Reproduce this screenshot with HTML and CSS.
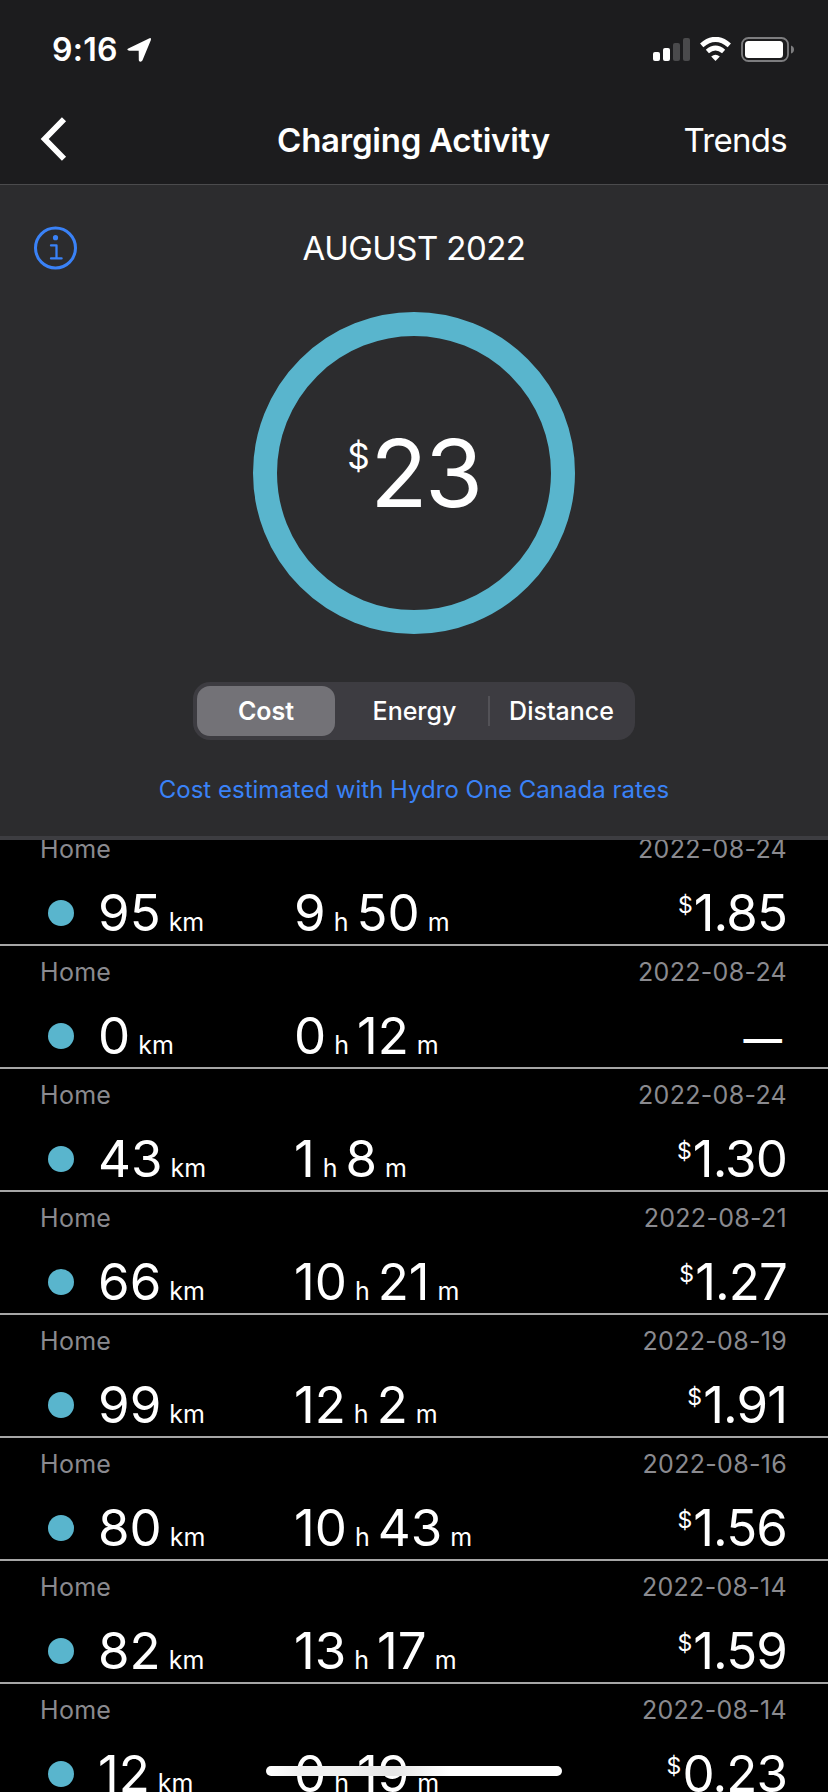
FILE: index.html
```html
<!DOCTYPE html>
<html lang="en">
<head>
<meta charset="utf-8">
<title>Charging Activity</title>
<link rel="stylesheet" href="styles.css">
</head>
<body>
<div class="screen">
  <header class="header">
    <div class="status">
      <span class="time">9:16</span>
      <svg class="location" width="26" height="26" viewBox="0 0 26 26"><path d="M2.3 11.400 23 1.400q2.600-1 1.900 1.600L16.400 23.600q-.9 1.600-2.700 1-.9-.5-.9-1.500l-.1-9.300-9.400-.1q-1.600-.1-2-1.200 0-.8 1-1.100z" fill="#fff"/></svg>
      <svg class="indicators" width="143" height="26" viewBox="0 0 143 26">
        <rect x="1" y="15" width="7" height="9" rx="2" fill="#fff"/>
        <rect x="11" y="11" width="7" height="13" rx="2" fill="#fff"/>
        <rect x="21" y="6" width="7" height="18" rx="2" fill="#4a4a4c"/>
        <rect x="31" y="1" width="7" height="23" rx="2" fill="#4a4a4c"/>
        <path d="M49.700 8.300Q63.500-3.600 77.300 8.300" fill="none" stroke="#fff" stroke-width="5"/>
        <path d="M55.400 14.500Q63.500 7.600 71.600 14.500" fill="none" stroke="#fff" stroke-width="4.800"/>
        <path d="M59.200 19.600Q63.500 16 67.800 19.600L63.500 24z" fill="#fff"/>
        <rect x="90" y="1" width="46" height="23" rx="6.500" fill="none" stroke="#7d7d7f" stroke-width="1.800"/>
        <rect x="93" y="4" width="38" height="17" rx="3.500" fill="#fff"/>
        <path d="M139 8.500q3 1 3 4t-3 4z" fill="#7d7d7f"/>
      </svg>
    </div>
    <nav class="nav">
      <svg class="back" width="27" height="44" viewBox="0 0 27 44"><path d="M24 2.200 4.700 22 24 41.800" fill="none" stroke="#fff" stroke-width="5.800"/></svg>
      <h1 class="title">Charging Activity</h1>
      <span class="trends">Trends</span>
    </nav>
  </header>

  <section class="summary">
    <div class="month-bar">
      <svg class="info" width="44" height="44" viewBox="0 0 44 44" fill="none" stroke="#3a82f7">
        <circle cx="22.500" cy="22" r="20" stroke-width="3"/>
        <circle cx="22.500" cy="11.700" r="2.600" fill="#3a82f7" stroke="none"/>
        <path d="M18 19.400h5.500v13M18 32.400h10.600" stroke-width="2.300" stroke-linecap="round" stroke-linejoin="round"/>
      </svg>
      <span class="month">AUGUST 2022</span>
    </div>
    <div class="ring"><span class="total"><span class="total-sign">$</span>23</span></div>
    <div class="segments">
      <span class="segment selected">Cost</span>
      <span class="segment middle">Energy</span>
      <span class="segment divided">Distance</span>
    </div>
    <a class="rates">Cost estimated with Hydro One Canada rates</a>
  </section>

  <main class="list">
    <div class="rows">
      <article class="row">
        <div class="meta"><span>Home</span><span class="date">2022-08-24</span></div>
        <div class="values"><i class="dot"></i><span class="distance">95<small>km</small></span><span class="duration">9<small>h</small><b>50</b><small>m</small></span><span class="cost"><sup>$</sup>1.85</span></div>
      </article>
      <article class="row">
        <div class="meta"><span>Home</span><span class="date">2022-08-24</span></div>
        <div class="values"><i class="dot"></i><span class="distance">0<small>km</small></span><span class="duration">0<small>h</small><b>12</b><small>m</small></span><span class="none">—</span></div>
      </article>
      <article class="row">
        <div class="meta"><span>Home</span><span class="date">2022-08-24</span></div>
        <div class="values"><i class="dot"></i><span class="distance">43<small>km</small></span><span class="duration">1<small>h</small><b>8</b><small>m</small></span><span class="cost"><sup>$</sup>1.30</span></div>
      </article>
      <article class="row">
        <div class="meta"><span>Home</span><span class="date">2022-08-21</span></div>
        <div class="values"><i class="dot"></i><span class="distance">66<small>km</small></span><span class="duration">10<small>h</small><b>21</b><small>m</small></span><span class="cost"><sup>$</sup>1.27</span></div>
      </article>
      <article class="row">
        <div class="meta"><span>Home</span><span class="date">2022-08-19</span></div>
        <div class="values"><i class="dot"></i><span class="distance">99<small>km</small></span><span class="duration">12<small>h</small><b>2</b><small>m</small></span><span class="cost"><sup>$</sup>1.91</span></div>
      </article>
      <article class="row">
        <div class="meta"><span>Home</span><span class="date">2022-08-16</span></div>
        <div class="values"><i class="dot"></i><span class="distance">80<small>km</small></span><span class="duration">10<small>h</small><b>43</b><small>m</small></span><span class="cost"><sup>$</sup>1.56</span></div>
      </article>
      <article class="row">
        <div class="meta"><span>Home</span><span class="date">2022-08-14</span></div>
        <div class="values"><i class="dot"></i><span class="distance">82<small>km</small></span><span class="duration">13<small>h</small><b>17</b><small>m</small></span><span class="cost"><sup>$</sup>1.59</span></div>
      </article>
      <article class="row">
        <div class="meta"><span>Home</span><span class="date">2022-08-14</span></div>
        <div class="values"><i class="dot"></i><span class="distance">12<small>km</small></span><span class="duration">0<small>h</small><b>19</b><small>m</small></span><span class="cost"><sup>$</sup>0.23</span></div>
      </article>
    </div>
  </main>
  <div class="home-indicator"></div>
</div>
</body>
</html>
```
FILE: styles.css
```css
* { box-sizing: border-box; }
body {
  margin: 0;
  background: #000;
  color: #fff;
  font-family: Inter, "Liberation Sans", sans-serif;
}
.screen {
  position: relative;
  display: flex;
  flex-direction: column;
  width: 828px;
  height: 1792px;
  overflow: hidden;
}

/* Header */
.header {
  height: 185px;
  flex: none;
  background: #1c1c1e;
  border-bottom: 1px solid #4b4b4d;
}
.status {
  display: flex;
  align-items: flex-start;
  height: 96px;
  padding: 35px 33px 0 52px;
}
.time {
  width: 74px;
  font-size: 32px;
  font-weight: 600;
  line-height: 29px;
  letter-spacing: 0.3px;
}
.location { margin-top: 2px; }
.indicators { margin: 2px 0 0 auto; }
.nav {
  display: grid;
  grid-template-columns: 1fr auto 1fr;
  align-items: center;
  height: 88px;
  padding: 0 41px 0 40px;
}
.title {
  margin: 0;
  font-size: 33px;
  font-weight: 600;
  letter-spacing: -0.25px;
}
.back { margin-top: -2px; }
.trends {
  justify-self: end;
  font-size: 33px;
  letter-spacing: -0.7px;
}

/* Summary */
.summary {
  display: flex;
  flex-direction: column;
  align-items: center;
  flex: none;
  height: 655px;
  background: #2c2c2e;
  border-bottom: 4px solid #3d3d41;
}
.month-bar {
  display: grid;
  grid-template-columns: 1fr auto 1fr;
  align-items: center;
  width: 100%;
  height: 127px;
  padding: 0 33px 1px;
}
.month {
  font-size: 33px;
  letter-spacing: -0.55px;
}
.ring {
  display: flex;
  justify-content: center;
  width: 322px;
  height: 322px;
  border: 24px solid #59b5cd;
  border-radius: 50%;
}
.total {
  font-size: 94px;
  line-height: 275px;
  letter-spacing: -2.5px;
  white-space: nowrap;
}
.total-sign {
  font-size: 35px;
  line-height: 0;
  vertical-align: 38px;
  margin-right: 3px;
}
.segments {
  display: grid;
  grid-template-columns: 138px 1fr 147px;
  width: 442px;
  height: 58px;
  margin-top: 48px;
  padding: 4px 0 4px 4px;
  border-radius: 17px;
  background: #3d3c41;
}
.segment {
  text-align: center;
  font-size: 25px;
  font-weight: 500;
  line-height: 50px;
}
.selected {
  border-radius: 13px;
  background: #737277;
  font-weight: 600;
}
.middle { padding-left: 6px; }
.divided {
  background: linear-gradient(#535257, #535257) 0 10px / 2px 30px no-repeat;
}
.rates {
  margin-top: 34px;
  color: #3a82f7;
  font-size: 24px;
  line-height: 32px;
  white-space: nowrap;
}

/* Sessions */
.list {
  flex: 1;
  min-height: 0;
  overflow: hidden;
}
.rows { margin-top: -17px; }
.row {
  height: 123px;
  padding: 11px 41px 0 40px;
  border-bottom: 2px solid #a6a6a6;
}
.meta {
  display: flex;
  justify-content: space-between;
  color: #8a8a8f;
  font-size: 25px;
  line-height: 30px;
  letter-spacing: 0.3px;
}
.values {
  display: grid;
  grid-template-columns: 58px 196px 1fr auto;
  align-items: center;
  margin-top: 19px;
  font-size: 51px;
  line-height: 60px;
  white-space: nowrap;
}
.dot {
  width: 26px;
  height: 26px;
  margin-left: 8px;
  border-radius: 50%;
  background: #59b5cd;
}
.values small {
  margin-left: 8px;
  font-size: 25px;
  line-height: 0;
}
.values b {
  margin-left: 8px;
  font-weight: inherit;
}
.cost { letter-spacing: -0.9px; }
.values sup {
  margin-right: 2px;
  font-size: 23px;
  line-height: 0;
  vertical-align: 18px;
}
.none {
  padding-top: 6px;
  margin-right: 5px;
  font-size: 38.5px;
  font-weight: 600;
  line-height: 54px;
}

.home-indicator {
  position: absolute;
  left: 266px;
  top: 1766px;
  width: 296px;
  height: 10px;
  border-radius: 5px;
  background: linear-gradient(90deg, #fff, #f0f0f0 12%, #f0f0f0 28%, #e6e6e6 43%, #fff 62%);
}
```
